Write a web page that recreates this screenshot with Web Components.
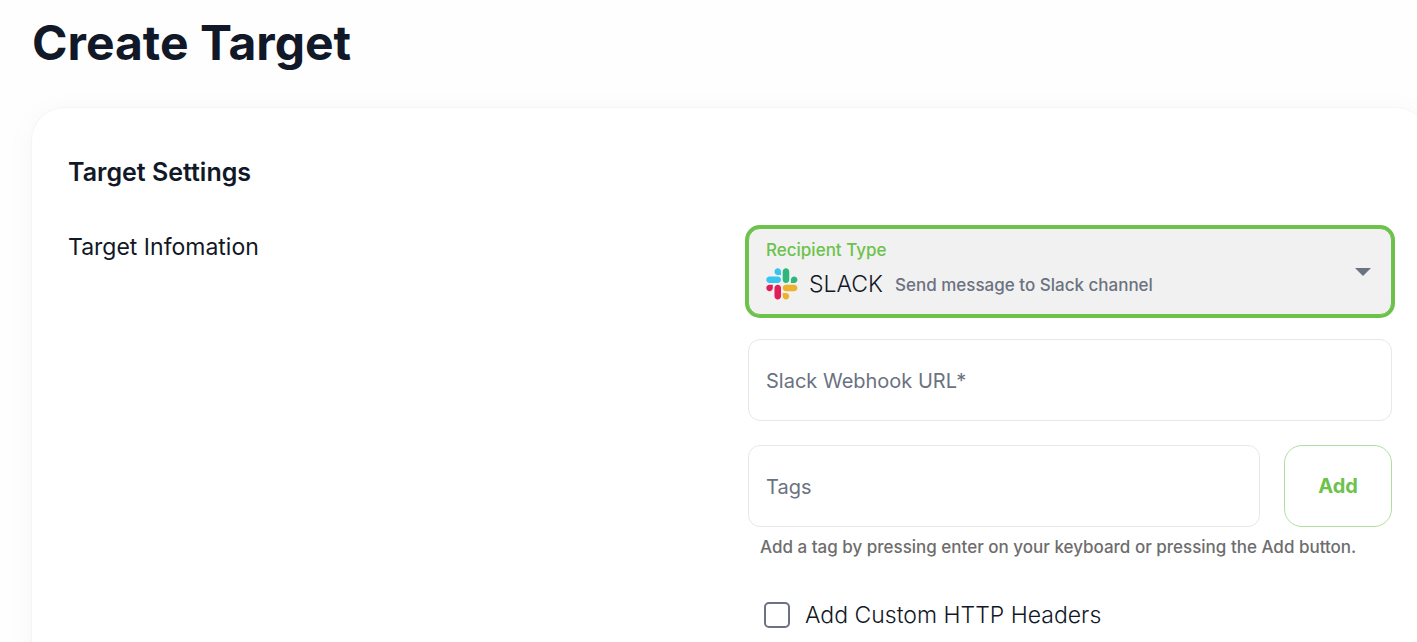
<!DOCTYPE html>
<html lang="en">
<head>
<meta charset="utf-8">
<title>Create Target</title>
<style>
    body {
        margin: 0;
        background: #fefefe;
        color: #111827;
        font-family: Inter, "Liberation Sans", sans-serif;
        overflow-x: hidden;
        --primary: #6cc24a;
        --primary-light: #b0dea0;
        --muted: #6b7280;
        --divider: #e6e8eb;
    }
</style>
</head>
<body>
<target-page>
    <span slot="title">Create Target</span>
    <settings-card heading="Target Settings" section="Target Infomation">
        <recipient-select></recipient-select>
        <text-field label="Slack Webhook URL*" name="webhook"></text-field>
        <tag-field></tag-field>
        <check-field>Add Custom HTTP Headers</check-field>
    </settings-card>
</target-page>

<script>
// Attach an open shadow root filled with the given markup.
function render(el, html) {
    const template = document.createElement('template');
    template.innerHTML = html;
    el.attachShadow({ mode: 'open' }).appendChild(template.content.cloneNode(true));
}

class TargetPage extends HTMLElement {
    constructor() {
        super();
        render(this, `
        <style>
            :host {
                display: block;
                /* the card runs past the right edge of the window */
                margin-right: -11px;
                padding: 14px 0 0 32px;
            }
            h1 {
                margin: 0 0 36px;
                font-size: 48px;
                font-weight: 700;
                line-height: 58px;
            }
        </style>
        <h1><slot name="title"></slot></h1>
        <slot></slot>`);
    }
}

class SettingsCard extends HTMLElement {
    constructor() {
        super();
        render(this, `
        <style>
            :host {
                display: block;
                box-sizing: border-box;
                padding: 48px 36px;
                border-radius: 32px;
                background: #fff;
                box-shadow: 0 0 2px rgba(17, 24, 39, 0.08), 0 5px 32px rgba(17, 24, 39, 0.04);
            }
            h2 {
                margin: 0 0 40px;
                font-size: 25px;
                font-weight: 600;
                line-height: 32px;
            }
            .row {
                display: grid;
                grid-template-columns: 1fr 1fr;
                gap: 36px;
            }
            h3 {
                margin: 0;
                padding-top: 3px;
                font-size: 23px;
                font-weight: 400;
                line-height: 32px;
            }
            .fields {
                display: flex;
                flex-direction: column;
                gap: 24px;
            }
        </style>
        <h2></h2>
        <div class="row">
            <h3></h3>
            <div class="fields"><slot></slot></div>
        </div>`);
    }
    connectedCallback() {
        this.shadowRoot.querySelector('h2').textContent = this.getAttribute('heading');
        this.shadowRoot.querySelector('h3').textContent = this.getAttribute('section');
    }
}

class RecipientSelect extends HTMLElement {
    constructor() {
        super();
        render(this, `
        <style>
            :host {
                display: flex;
                align-items: center;
                justify-content: space-between;
                box-sizing: border-box;
                padding: 8px 20px 13px 17px;
                border: 1px solid var(--primary);
                border-radius: 12px;
                background: #f1f1f1;
                box-shadow: 0 0 0 3px var(--primary);
            }
            .label {
                display: block;
                color: var(--primary);
                font-size: 17px;
                font-weight: 500;
                line-height: 27px;
            }
            .value {
                display: flex;
                align-items: center;
                margin-top: 3px;
            }
            .logo {
                width: 32px;
                height: 32px;
                margin-right: 11px;
            }
            select {
                appearance: none;
                field-sizing: content;
                margin: 0 12px 0 0;
                padding: 0;
                border: 0;
                outline: 0;
                background: none;
                color: inherit;
                font: 300 23px/34px Inter, "Liberation Sans", sans-serif;
            }
            .note {
                padding-top: 2px;
                color: var(--muted);
                font-size: 17px;
                font-weight: 500;
                line-height: 32px;
            }
            .arrow {
                width: 16px;
                height: 8px;
                margin-top: 6px;
                fill: var(--muted);
            }
        </style>
        <div>
            <label class="label" for="type">Recipient Type</label>
            <div class="value">
                <svg class="logo" viewBox="0 0 128 128" aria-hidden="true">
                    <path fill="#e01e5a" d="M27.3 80.2c0 7.2-5.9 13.1-13.1 13.1S1.1 87.4 1.1 80.2s5.9-13.1 13.1-13.1h13.1v13.1zM33.9 80.2c0-7.2 5.9-13.1 13.1-13.1s13.1 5.9 13.1 13.1v32.7c0 7.2-5.9 13.1-13.1 13.1s-13.1-5.9-13.1-13.1V80.2z"/>
                    <path fill="#36c5f0" d="M47 27.6c-7.2 0-13.1-5.9-13.1-13.1S39.8 1.4 47 1.4s13.1 5.9 13.1 13.1v13.1H47zM47 34.2c7.2 0 13.1 5.9 13.1 13.1S54.2 60.4 47 60.4H14.2C7 60.4 1.1 54.5 1.1 47.3S7 34.2 14.2 34.2H47z"/>
                    <path fill="#2eb67d" d="M99.6 47.3c0-7.2 5.9-13.1 13.1-13.1s13.1 5.9 13.1 13.1-5.9 13.1-13.1 13.1H99.6V47.3zM93 47.3c0 7.2-5.9 13.1-13.1 13.1s-13.1-5.9-13.1-13.1V14.5c0-7.2 5.9-13.1 13.1-13.1S93 7.3 93 14.5v32.8z"/>
                    <path fill="#ecb22e" d="M79.9 99.9c7.2 0 13.1 5.9 13.1 13.1s-5.9 13.1-13.1 13.1-13.1-5.9-13.1-13.1V99.9h13.1zM79.9 93.3c-7.2 0-13.1-5.9-13.1-13.1s5.9-13.1 13.1-13.1h32.8c7.2 0 13.1 5.9 13.1 13.1s-5.9 13.1-13.1 13.1H79.9z"/>
                </svg>
                <select id="type"><option>SLACK</option></select>
                <span class="note">Send message to Slack channel</span>
            </div>
        </div>
        <svg class="arrow" viewBox="0 0 16 8" aria-hidden="true"><path d="M0 0h16L8 8z"/></svg>`);
    }
}

class TextField extends HTMLElement {
    constructor() {
        super();
        render(this, `
        <style>
            :host {
                display: grid;
                align-items: center;
            }
            label, input {
                grid-area: 1 / 1;
            }
            label {
                padding: 2px 18px 0;
                color: var(--muted);
                font-size: 20px;
                line-height: 28px;
                pointer-events: none;
            }
            input {
                box-sizing: border-box;
                width: 100%;
                height: 82px;
                margin: 0;
                padding: 0 18px;
                border: 1px solid var(--divider);
                border-radius: 12px;
                outline: 0;
                background: none;
                color: inherit;
                font: inherit;
                font-size: 20px;
            }
            input:focus {
                border-color: var(--primary);
            }
            input:not(:placeholder-shown) + label {
                visibility: hidden;
            }
        </style>
        <input id="input" type="text" placeholder=" ">
        <label for="input"></label>`);
    }
    connectedCallback() {
        this.shadowRoot.querySelector('label').textContent = this.getAttribute('label');
        this.shadowRoot.querySelector('input').name = this.getAttribute('name');
    }
}

class TagField extends HTMLElement {
    constructor() {
        super();
        render(this, `
        <style>
            :host {
                display: block;
            }
            .line {
                display: flex;
                gap: 24px;
            }
            text-field {
                flex: 1;
            }
            button {
                width: 108px;
                border: 1px solid var(--primary-light);
                border-radius: 18px;
                background: none;
                color: var(--primary);
                font: inherit;
                font-size: 20px;
                font-weight: 700;
                cursor: pointer;
            }
            p {
                margin: 6px 12px 0;
                color: #6d6d6d;
                font-size: 17px;
                font-weight: 500;
                line-height: 28px;
            }
        </style>
        <div class="line">
            <text-field label="Tags" name="tags"></text-field>
            <button type="button">Add</button>
        </div>
        <p>Add a tag by pressing enter on your keyboard or pressing the Add button.</p>`);
    }
}

class CheckField extends HTMLElement {
    constructor() {
        super();
        render(this, `
        <style>
            :host {
                display: block;
                padding: 14px 16px 0;
            }
            label {
                display: flex;
                align-items: center;
                gap: 15px;
                font-size: 23px;
                font-weight: 300;
                line-height: 32px;
            }
            input {
                appearance: none;
                box-sizing: border-box;
                width: 26px;
                height: 26px;
                margin: 0;
                border: 2px solid var(--muted);
                border-radius: 5px;
            }
            input:checked {
                border-color: var(--primary);
                background: var(--primary);
            }
        </style>
        <label><input type="checkbox"><slot></slot></label>`);
    }
}

customElements.define('target-page', TargetPage);
customElements.define('settings-card', SettingsCard);
customElements.define('recipient-select', RecipientSelect);
customElements.define('text-field', TextField);
customElements.define('tag-field', TagField);
customElements.define('check-field', CheckField);
</script>
</body>
</html>
